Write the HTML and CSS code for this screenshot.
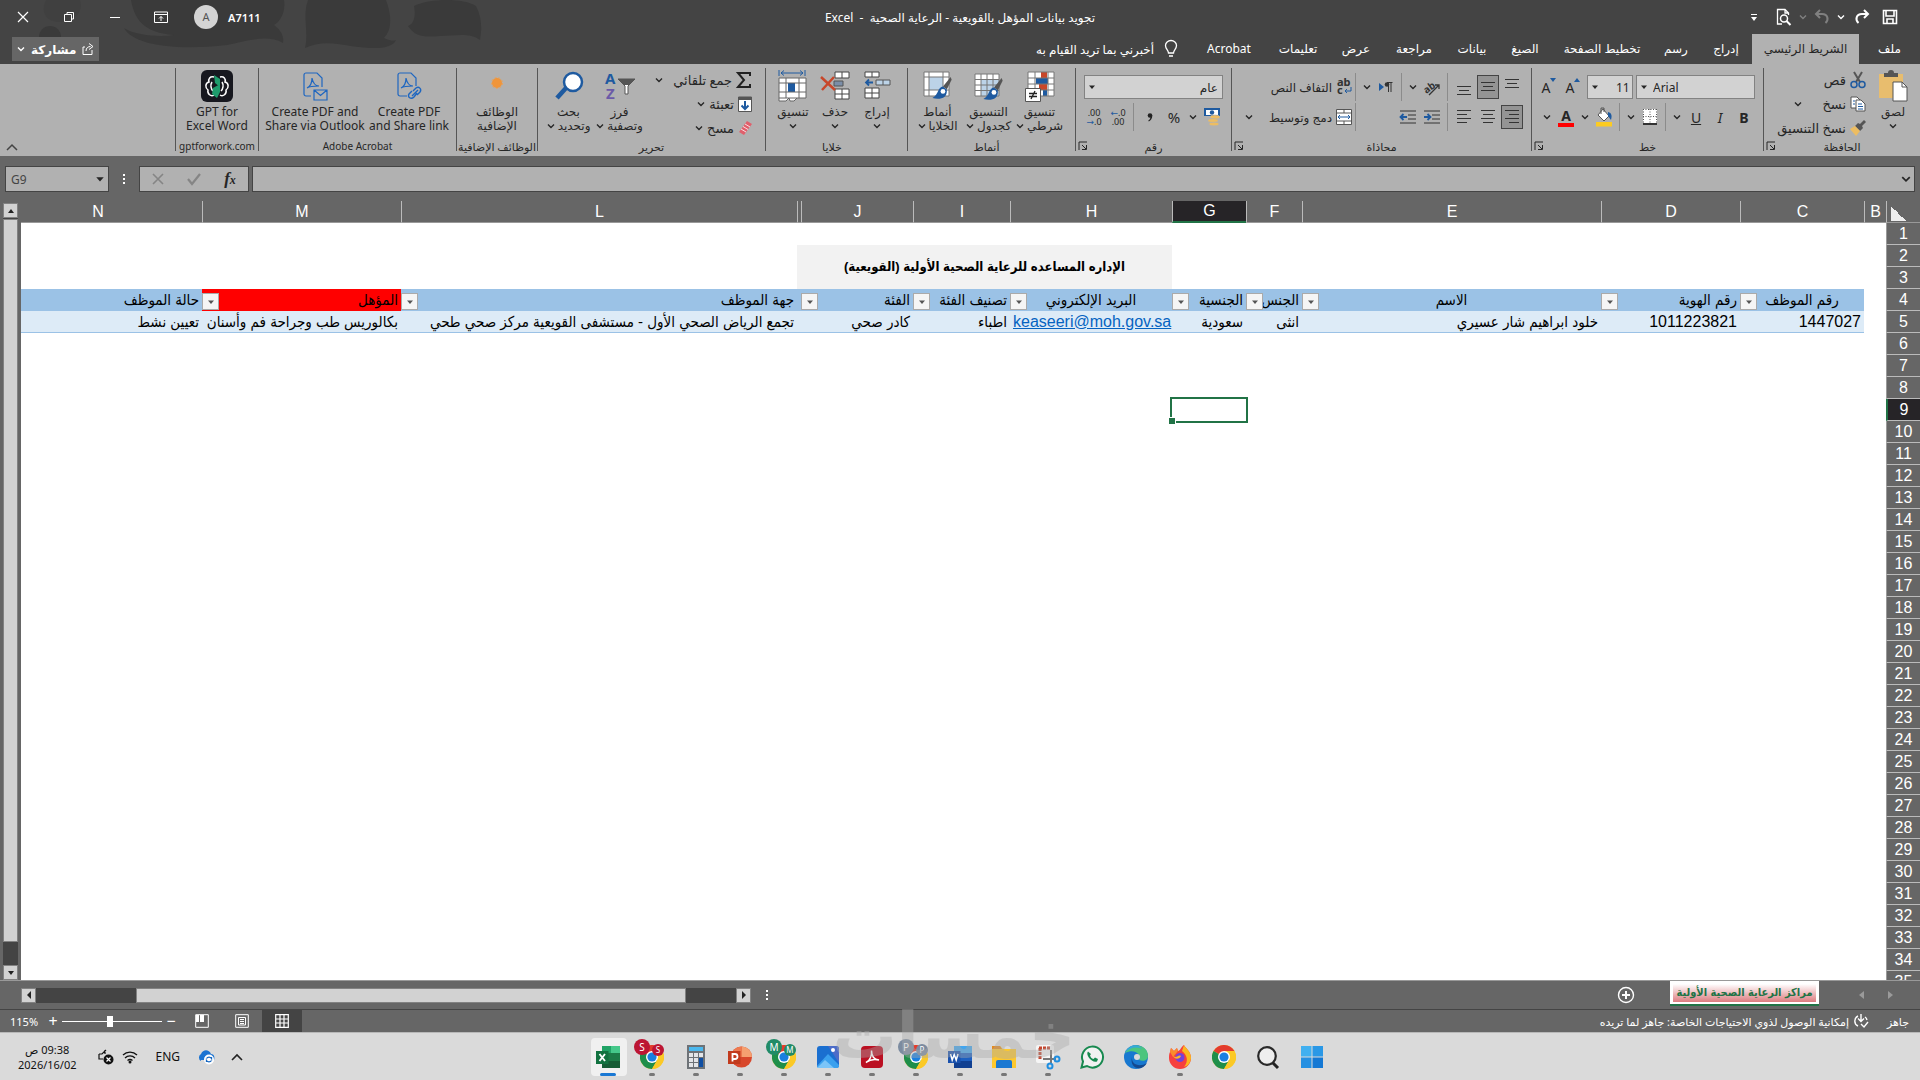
FILE: index.html
```html
<!DOCTYPE html>
<html lang="ar" dir="rtl">
<head>
  <meta charset="UTF-8">
  <meta name="viewport" content="width=device-width, initial-scale=1.0">
  <title>تجويد بيانات المؤهل بالقويعية - الرعاية الصحية - Excel</title>
  <link rel="stylesheet" href="styles.css">
</head>
<body>

<!-- Icons used more than once -->
<svg class="sprite" aria-hidden="true">
  <symbol id="chev" viewBox="0 0 8 8"><path d="M1 2.500l3 3 3-3" fill="none" stroke="currentColor" stroke-width="1.400"/></symbol>
  <symbol id="tri" viewBox="0 0 8 8"><path d="M1 2.500h6L4 6z" fill="currentColor"/></symbol>
  <symbol id="launch" viewBox="0 0 10 10"><path d="M1 9V1h8M4 4l4 4M8.500 4v4.500H4" fill="none" stroke="currentColor"/></symbol>
  <symbol id="chrome" viewBox="0 0 24 24">
    <circle cx="12" cy="12" r="12" fill="#fbc926"/>
    <path d="M12 12L1.600 6A12 12 0 0 1 22.400 6z" fill="#e33b2e"/>
    <path d="M12 12L1.600 6A12 12 0 0 0 12 24l5.200-9z" fill="#1e8e4a"/>
    <path d="M12 12L12 6h10.400A12 12 0 0 1 12 24l5.200-9z" fill="#fbc926"/>
    <circle cx="12" cy="12" r="6" fill="#fff"/><circle cx="12" cy="12" r="4.600" fill="#1a7fe0"/>
  </symbol>
  <symbol id="brush" viewBox="0 0 20 26">
    <path d="M19 1l-8 10 4 3 5-10z" fill="#555"/><path d="M11 11c-6 1-4 8-11 12 8 2 16 0 15-9z" fill="#1e5aa0"/><circle cx="11" cy="16" r="2.500" fill="#fff"/>
  </symbol>
</svg>

<header class="titlebar">
  <svg class="pattern" viewBox="0 0 520 64" aria-hidden="true">
    <g fill="#3a3a3a">
      <path d="M131 0h153c2 12-4 22-10 25 8 6 10 12 9 18-16-9-36-2-56 2-52 6-94 0-103-17 12 8 38 9 50 7-32-2-40-18-43-35z"/>
      <path d="M308 0h78c6 16 6 30-2 38 6 3 10 3 12 2-6 14-44 6-58 4-14-2-24 0-33 4 4-16-3-32 3-48z"/>
      <path d="M414 6c16-8 50-8 62 0 6 12 6 22 4 34-10-8-26-4-40-4-14 1-24 2-32-10 6-2 8-10 6-20z"/>
      <circle cx="50" cy="37" r="11"/>
    </g>
    <path d="M46 0h34c4 12-6 22-20 22S40 12 46 0z" fill="#404040"/>
  </svg>
  <div class="quick">
    <button aria-label="حفظ"><svg width="16" height="16" viewBox="0 0 16 16"><path d="M1.500 1.500h13v13h-13zM4 2v5h8V2M5 14v-4h6v4" fill="none" stroke="#fff" stroke-width="1.600"/></svg></button>
    <button aria-label="إعادة"><svg width="16" height="16" viewBox="0 0 16 16"><path d="M4.500 14C1 11 2 5 8 5h6M10 1l4 4-4 4" fill="none" stroke="#fff" stroke-width="2"/></svg></button>
    <button class="mini" aria-label="خيارات الإعادة"><svg width="8" height="8"><use href="#chev"/></svg></button>
    <button class="dim" aria-label="تراجع"><svg width="16" height="16" viewBox="0 0 16 16"><path d="M11.500 14C15 11 14 5 8 5H2M6 1L2 5l4 4" fill="none" stroke="currentColor" stroke-width="2"/></svg></button>
    <button class="mini dim" aria-label="خيارات التراجع"><svg width="8" height="8"><use href="#chev"/></svg></button>
    <button aria-label="معاينة"><svg width="16" height="18" viewBox="0 0 16 18"><path d="M6 16H1.500V1.500H9L12.500 5v2M9 1.500V5h3.500" fill="none" stroke="#fff" stroke-width="1.300"/><circle cx="8" cy="10.500" r="3.500" fill="none" stroke="#fff" stroke-width="1.500"/><path d="M10.500 13l4 4" stroke="#fff" stroke-width="2"/></svg></button>
    <button class="more" aria-label="تخصيص"><svg width="8" height="9" viewBox="0 0 8 9"><path d="M1 1.500h6" stroke="#fff"/><path d="M1 4h6L4 8z" fill="#fff"/></svg></button>
  </div>
  <h1>تجويد بيانات المؤهل بالقويعية - الرعاية الصحية &nbsp;-&nbsp; Excel</h1>
  <div class="window">
    <span>A7111</span><span class="avatar">A</span>
    <button aria-label="عرض الشريط"><svg width="14" height="12" viewBox="0 0 14 12"><path d="M.500 1h13v10.500H.500zM1 3.500h12M7 10V5.500M5 7.500l2-2 2 2" fill="none" stroke="#fff"/></svg></button>
    <button aria-label="تصغير"><svg width="12" height="12" viewBox="0 0 12 12"><path d="M1 6.500h10" stroke="#fff"/></svg></button>
    <button aria-label="استعادة"><svg width="12" height="12" viewBox="0 0 12 12"><path d="M1.500 3.500h7v7h-7zM4 3V1.500h6.500V8H9" fill="none" stroke="#fff"/></svg></button>
    <button aria-label="إغلاق"><svg width="12" height="12" viewBox="0 0 12 12"><path d="M1 1l10 10M11 1L1 11" stroke="#fff" stroke-width="1.200"/></svg></button>
  </div>
</header>

<div class="tabbar">
  <nav>
    <a href="#">ملف</a><a href="#" class="active">الشريط الرئيسي</a><a href="#">إدراج</a><a href="#">رسم</a>
    <a href="#">تخطيط الصفحة</a><a href="#">الصيغ</a><a href="#">بيانات</a><a href="#">مراجعة</a>
    <a href="#">عرض</a><a href="#">تعليمات</a><a href="#">Acrobat</a>
  </nav>
  <button class="tell"><svg width="14" height="18" viewBox="0 0 14 18"><path d="M4.500 13c0-3-3-4-3-7.500a5.500 5 0 0 1 11 0c0 3.500-3 4.500-3 7.500zM5 16h4" fill="none" stroke="#fff" stroke-width="1.300"/></svg>أخبرني بما تريد القيام به</button>
  <button class="share"><svg width="12" height="12" viewBox="0 0 12 12"><path d="M3 4H1v7.500h9V7M4 8c0-3 2-4.500 4.500-4.500M7 .500l4 3-4 3" fill="none" stroke="#fff"/></svg>مشاركة<svg width="8" height="8"><use href="#chev"/></svg></button>
</div>

<div class="ribbon">
  <section class="group clip">
    <div class="body">
      <button class="big"><svg width="30" height="32" viewBox="0 0 30 32"><path d="M1 4h24v24H1z" fill="#e8bd6e"/><path d="M6 7V3h4a3 3 0 0 1 6 0h4v4z" fill="#555"/><path d="M15 12h9l5 5v14H15z" fill="#fff" stroke="#555"/><path d="M24 12v5h5" fill="none" stroke="#555"/></svg>لصق<svg width="8" height="8"><use href="#chev"/></svg></button>
      <div class="list">
        <button><svg width="16" height="18" viewBox="0 0 16 18"><path d="M4 1l6 10M12 1L6 11" stroke="#555" stroke-width="2"/><circle cx="4" cy="13.500" r="3" fill="none" stroke="#1e5aa0" stroke-width="1.500"/><circle cx="12" cy="13.500" r="3" fill="none" stroke="#1e5aa0" stroke-width="1.500"/></svg>قص</button>
        <button><svg width="16" height="16" viewBox="0 0 16 16"><path d="M1 1h6l3 3v8H1z" fill="#fff" stroke="#555"/><path d="M6 4h5l4 4v7H6z" fill="#fff" stroke="#555"/><path d="M3 5h2M3 8h2M8 8h4M8 10.500h5M8 13h5" stroke="#1e5aa0"/></svg>نسخ<svg class="gap" width="8" height="8"><use href="#chev"/></svg></button>
        <button><svg width="16" height="16" viewBox="0 0 16 16"><path d="M14 0l2 2-4 4 1 2-3 3-5-5 3-3 2 1z" fill="#555"/><path d="M5 6l5 5-4 5-6-7z" fill="#edbd62"/></svg>نسخ التنسيق</button>
      </div>
    </div>
    <h2>الحافظة</h2>
    <button class="launcher" aria-label="خيارات الحافظة"><svg width="10" height="10"><use href="#launch"/></svg></button>
  </section>

  <section class="group font">
    <div class="body rows">
      <div class="row">
        <label class="combo name" dir="ltr"><select aria-label="الخط"><option>Arial</option></select><svg width="8" height="8"><use href="#tri"/></svg></label>
        <label class="combo size" dir="ltr"><select aria-label="حجم الخط"><option>11</option></select><svg width="8" height="8"><use href="#tri"/></svg></label>
        <button class="t letter" aria-label="تكبير الخط">A<svg width="6" height="5" viewBox="0 0 6 5"><path d="M0 4l3-4 3 4z" fill="#1e5aa0"/></svg></button>
        <button class="t letter" aria-label="تصغير الخط">A<svg width="6" height="5" viewBox="0 0 6 5"><path d="M0 0l3 4 3-4z" fill="#1e5aa0"/></svg></button>
      </div>
      <div class="row">
        <button class="t"><b>B</b></button><button class="t"><i>I</i></button><button class="t"><u>U</u></button>
        <button class="c" aria-label="تسطير"><svg width="8" height="8"><use href="#chev"/></svg></button><span class="sep"></span>
        <button class="t" aria-label="حدود"><svg width="14" height="16" viewBox="0 0 14 16"><path d="M0 0h14v15H0z" fill="#fff"/><path d="M0 .500h14M0 7.500h14M.500 0v15M7 0v15M13.500 0v15" stroke="#555" stroke-dasharray="1 1.500"/><path d="M0 15h14" stroke="#333" stroke-width="2"/></svg></button>
        <button class="c" aria-label="أنواع الحدود"><svg width="8" height="8"><use href="#chev"/></svg></button><span class="sep"></span>
        <button class="t" aria-label="لون التعبئة"><svg width="18" height="20" viewBox="0 0 18 20"><path d="M8 2l6 7-5 5-6-6z" fill="#fff" stroke="#555"/><path d="M6 7V1h3v4" fill="none" stroke="#555"/><path d="M13 5c4 1 4 4 3 8l-3-4z" fill="#1e5aa0"/><path d="M1 15h16v4.500H1z" fill="#fccb22"/></svg></button>
        <button class="c" aria-label="ألوان التعبئة"><svg width="8" height="8"><use href="#chev"/></svg></button>
        <button class="t color" aria-label="لون الخط">A</button>
        <button class="c" aria-label="ألوان الخط"><svg width="8" height="8"><use href="#chev"/></svg></button>
      </div>
    </div>
    <h2>خط</h2>
    <button class="launcher" aria-label="خيارات الخط"><svg width="10" height="10"><use href="#launch"/></svg></button>
  </section>

  <section class="group align">
    <div class="body rows">
      <div class="row">
        <button class="t" aria-label="محاذاة لأعلى"><svg width="16" height="16" viewBox="0 0 16 16"><path d="M1 .500h14M3 4.500h10M1 8.500h14" stroke="#333"/></svg></button>
        <button class="t on" aria-label="محاذاة للوسط"><svg width="16" height="16" viewBox="0 0 16 16"><path d="M1 3.500h14M3 7.500h10M1 11.500h14" stroke="#333"/></svg></button>
        <button class="t" aria-label="محاذاة لأسفل"><svg width="16" height="16" viewBox="0 0 16 16"><path d="M1 7.500h14M3 11.500h10M1 15.500h14" stroke="#333"/></svg></button><span class="sep"></span>
        <button class="t" aria-label="الاتجاه"><svg width="18" height="16" viewBox="0 0 18 16"><text x="0" y="11" font-size="10" font-weight="bold" transform="rotate(-35 8 8)" direction="ltr" fill="#333">ab</text><path d="M6 16L16 6M12 6h4v4" fill="none" stroke="#333" stroke-width="1.300"/></svg></button>
        <button class="c" aria-label="خيارات الاتجاه"><svg width="8" height="8"><use href="#chev"/></svg></button><span class="sep"></span>
        <button class="t" aria-label="اتجاه النص"><svg width="14" height="12" viewBox="0 0 14 12"><path d="M0 2l5 4-5 4z" fill="#1e5aa0"/><path d="M9.500 11V1.500M12 11V1.500M13.500 1.500H8" fill="none" stroke="#333"/><circle cx="8" cy="3.500" r="2.300" fill="#333"/></svg></button>
        <button class="c" aria-label="خيارات اتجاه النص"><svg width="8" height="8"><use href="#chev"/></svg></button><span class="sep"></span>
        <button class="wide"><svg width="16" height="18" viewBox="0 0 16 18"><g font-size="11" font-weight="bold" fill="#333" direction="ltr"><text x="1" y="8">ab</text><text x="1" y="16">c</text></g><path d="M15 9v4H9M11 11l-2 2 2 2" fill="none" stroke="#1e5aa0"/></svg>التفاف النص</button>
      </div>
      <div class="row">
        <button class="t on" aria-label="محاذاة لليمين"><svg width="16" height="16" viewBox="0 0 16 16"><path d="M1 1.500h14M5 5.500h10M1 9.500h14M5 13.500h10" stroke="#333"/></svg></button>
        <button class="t" aria-label="توسيط"><svg width="16" height="16" viewBox="0 0 16 16"><path d="M1 1.500h14M3 5.500h10M1 9.500h14M3 13.500h10" stroke="#333"/></svg></button>
        <button class="t" aria-label="محاذاة لليسار"><svg width="16" height="16" viewBox="0 0 16 16"><path d="M1 1.500h14M1 5.500h10M1 9.500h14M1 13.500h10" stroke="#333"/></svg></button><span class="sep"></span>
        <button class="t" aria-label="إنقاص المسافة"><svg width="16" height="14" viewBox="0 0 16 14"><path d="M0 1h16M8 5h8M8 9h8M0 13h16" stroke="#333"/><path d="M0 7h6M3.500 4l3 3-3 3" fill="none" stroke="#1e5aa0" stroke-width="1.800"/></svg></button>
        <button class="t" aria-label="زيادة المسافة"><svg width="16" height="14" viewBox="0 0 16 14"><path d="M0 1h16M8 5h8M8 9h8M0 13h16" stroke="#333"/><path d="M7 7H1M3.500 4l-3 3 3 3" fill="none" stroke="#1e5aa0" stroke-width="1.800"/></svg></button>
        <span class="blank"></span><span class="sep"></span>
        <button class="wide"><svg width="16" height="16" viewBox="0 0 16 16"><path d="M.500 .500h15v15H.500z" fill="#fff" stroke="#555"/><path d="M0 4h16M0 12h16M8 0v4M8 12v4" stroke="#555"/><path d="M2 8h12M4 6L2 8l2 2M12 6l2 2-2 2" fill="none" stroke="#1e5aa0"/></svg>دمج وتوسيط</button>
        <button class="c end" aria-label="خيارات الدمج"><svg width="8" height="8"><use href="#chev"/></svg></button>
      </div>
    </div>
    <h2>محاذاة</h2>
    <button class="launcher" aria-label="خيارات المحاذاة"><svg width="10" height="10"><use href="#launch"/></svg></button>
  </section>

  <section class="group number">
    <div class="body rows">
      <div class="row">
        <label class="combo format"><select aria-label="تنسيق الأرقام"><option>عام</option></select><svg width="8" height="8"><use href="#tri"/></svg></label>
      </div>
      <div class="row">
        <button class="t" aria-label="عملة"><svg width="18" height="18" viewBox="0 0 18 18"><path d="M1 0h16v8H1z" fill="#1e5aa0"/><path d="M3 2h12v5H3z" fill="#fff"/><circle cx="9" cy="4.500" r="2.200" fill="#1e5aa0"/><g fill="#edbd62" stroke="#b1b1b1" stroke-width=".6"><ellipse cx="12" cy="9" rx="5" ry="2"/><ellipse cx="10" cy="12.500" rx="5" ry="2"/><ellipse cx="11" cy="16" rx="5" ry="1.800"/></g></svg></button>
        <button class="c" aria-label="عملات"><svg width="8" height="8"><use href="#chev"/></svg></button>
        <button class="t pct">%</button><button class="t comma" aria-label="نمط الفاصلة"><svg width="6" height="9" viewBox="0 0 6 9"><circle cx="3" cy="2.500" r="2.300" fill="#222"/><path d="M5.300 2.500c0 3-1.500 5-3.500 6l-.500-1C3 6.500 3.500 5 3.500 3z" fill="#222"/></svg></button><span class="sep"></span>
        <button class="t dec" aria-label="زيادة المنازل"><span><em>←</em>.0</span><span>.00</span></button>
        <button class="t dec" aria-label="إنقاص المنازل"><span>.00</span><span><em>→</em>.0</span></button>
      </div>
    </div>
    <h2>رقم</h2>
    <button class="launcher" aria-label="خيارات الرقم"><svg width="10" height="10"><use href="#launch"/></svg></button>
  </section>

  <section class="group styles">
    <div class="body">
      <button class="big"><svg width="30" height="32" viewBox="0 0 30 32"><path d="M3 2h26v24H3z" fill="#fff"/><path d="M16 2h6v6h-6zM14 14h8v6h-8z" fill="#c8472a"/><path d="M11 8h12v6H11zM18 20h4v6h-4z" fill="#1e5aa0"/><path d="M3 2h26v24H3zM3 8h26M3 14h26M3 20h26M10 2v24M23 2v24" fill="none" stroke="#777"/><path d="M.500 18.500h15v13H.500z" fill="#fff" stroke="#555"/><path d="M4 23.500h8M4 26.500h8M10 21l-4 8" stroke="#222" stroke-width="1.300"/></svg><span>تنسيق</span><span>شرطي <svg width="8" height="8"><use href="#chev"/></svg></span></button>
      <button class="big"><svg width="30" height="32" viewBox="0 0 30 32"><path d="M1 4h24v22H1z" fill="#fff"/><path d="M7 10h18v16H7z" fill="#bcd3e8"/><path d="M1 4h24v22H1zM1 9.500h24M1 15h24M1 20.500h24M7 4v22M13 4v22M19 4v22" fill="none" stroke="#777"/><use href="#brush" x="9" y="7" width="20" height="25"/></svg><span>التنسيق</span><span>كجدول <svg width="8" height="8"><use href="#chev"/></svg></span></button>
      <button class="big"><svg width="30" height="32" viewBox="0 0 30 32"><path d="M1 2h25v24H1z" fill="#fff"/><path d="M6 7h14v13H6z" fill="#bcd3e8"/><path d="M1 2h25v24H1zM1 7h25M1 20h25M6 2v24M20 2v24" fill="none" stroke="#777"/><use href="#brush" x="9" y="6" width="20" height="25"/></svg><span>أنماط</span><span>الخلايا <svg width="8" height="8"><use href="#chev"/></svg></span></button>
    </div>
    <h2>أنماط</h2>
  </section>

  <section class="group cells">
    <div class="body">
      <button class="big"><svg width="28" height="32" viewBox="0 0 28 32"><path d="M2 2h14v5H2zM2 18h14v10H2z" fill="#fff" stroke="#444"/><path d="M9 2v5M9 18v10M2 23h14" stroke="#444"/><path d="M13 10h14v5H13z" fill="#bcd3e8" stroke="#555"/><path d="M20 10v5" stroke="#555"/><path d="M3 12.500h7M6 9.500l-3 3 3 3" fill="none" stroke="#1e5aa0" stroke-width="1.800"/></svg>إدراج<svg width="8" height="8"><use href="#chev"/></svg></button>
      <button class="big"><svg width="30" height="32" viewBox="0 0 30 32"><path d="M15 2h14v6H15zM15 19h14v10H15z" fill="#fff" stroke="#444"/><path d="M22 2v6M22 19v10M15 24h14" stroke="#444"/><path d="M14 11h9v5h-9z" fill="#7b8ea8" stroke="#555"/><path d="M1 7l14 13M14 7L2 20" stroke="#c8472a" stroke-width="2.500"/></svg>حذف<svg width="8" height="8"><use href="#chev"/></svg></button>
      <button class="big"><svg width="30" height="32" viewBox="0 0 30 32"><path d="M3 3h22M6 .500L3 3l3 2.500M22 .500L25 3l-3 2.500M1 0v6M27 0v6" fill="none" stroke="#1e5aa0"/><path d="M1 8h27v20H19l-3 3h-4l-1-2-3 2H1z" fill="#fff"/><path d="M10 13h7v9h-7z" fill="#1e5aa0"/><path d="M1 8h27v20H1zM1 13h27M1 22h27M8 8v20M19 28l-3 3h-4l-1-3-3 3H1v-3M21 8v20" fill="none" stroke="#666"/></svg>تنسيق<svg width="8" height="8"><use href="#chev"/></svg></button>
    </div>
    <h2>خلايا</h2>
  </section>

  <section class="group editing">
    <div class="body">
      <div class="list">
        <button><svg width="16" height="16" viewBox="0 0 16 16"><path d="M14 4V1H2l6 7-6 7h12v-3" fill="none" stroke="#222" stroke-width="2"/></svg>جمع تلقائي<svg class="end" width="8" height="8"><use href="#chev"/></svg></button>
        <button><svg width="14" height="16" viewBox="0 0 14 16"><path d="M.500 1h13v14.500H.500z" fill="#fff" stroke="#555"/><path d="M1 1h12v3H1z" fill="#555"/><path d="M7 5v8M3.500 9.500L7 13l3.500-3.500" fill="none" stroke="#1e5aa0" stroke-width="2"/></svg>تعبئة<svg width="8" height="8"><use href="#chev"/></svg></button>
        <button><svg width="14" height="14" viewBox="0 0 14 14"><path d="M9 0l5 3-8 11-5-3z" fill="#e0606c"/><path d="M3 8l5 3M5 5.500l5 3M7 3l5 3" stroke="#fff" stroke-width=".8"/></svg>مسح<svg width="8" height="8"><use href="#chev"/></svg></button>
      </div>
      <button class="big"><svg width="30" height="32" viewBox="0 0 30 32"><g font-size="15" font-weight="bold" direction="ltr"><text x="0" y="14" fill="#1e5aa0">A</text><text x="1" y="29" fill="#6b5aa8">Z</text></g><path d="M13 9h17l-7 7v8h-3v-8z" fill="#fff" stroke="#555"/><path d="M13 9h17l-6 6h-5z" fill="#555"/></svg><span>فرز</span><span>وتصفية <svg width="8" height="8"><use href="#chev"/></svg></span></button>
      <button class="big"><svg width="30" height="32" viewBox="0 0 30 32"><circle cx="19" cy="12" r="9" fill="#fff" stroke="#1e5aa0" stroke-width="2.500"/><path d="M12 18L3 28" stroke="#1e5aa0" stroke-width="4.500"/></svg><span>بحث</span><span>وتحديد <svg width="8" height="8"><use href="#chev"/></svg></span></button>
    </div>
    <h2>تحرير</h2>
  </section>

  <section class="group addins">
    <div class="body">
      <button class="big"><svg width="30" height="32" viewBox="0 0 30 32"><circle cx="15" cy="13" r="5" fill="#f0953a"/><circle cx="15" cy="13" r="5.500" fill="none" stroke="#e9a35c" stroke-dasharray="2 1.800"/></svg><span>الوظائف</span><span>الإضافية</span></button>
    </div>
    <h2>الوظائف الإضافية</h2>
  </section>

  <section class="group acrobat">
    <div class="body">
      <button class="big"><svg width="28" height="32" viewBox="0 0 28 32"><path d="M12 26H5a2 2 0 0 1-2-2V5a2 2 0 0 1 2-2h11l5 5v8M6 18c4-2 5-6 5-10 1 5 3 8 7 8-4 0-9 0-12 2" fill="none" stroke="#1e66c0" stroke-width="1.200"/><path d="M18 21l3-3c3-2 6 1 4 4l-3 3M22 23l-3 4c-3 3-7 0-5-3l3-3M17 26l6-6" fill="none" stroke="#1e66c0" stroke-width="1.400"/></svg><span>Create PDF</span><span>and Share link</span></button>
      <button class="big"><svg width="28" height="32" viewBox="0 0 28 32"><path d="M10 26H5a2 2 0 0 1-2-2V5a2 2 0 0 1 2-2h11l5 5v9M6 18c4-2 5-6 5-10 1 5 3 8 7 8-4 0-9 0-12 2M13 20h13v10H13zM13 20l6.500 5.500L26 20" fill="none" stroke="#1e66c0" stroke-width="1.200"/></svg><span>Create PDF and</span><span>Share via Outlook</span></button>
    </div>
    <h2 class="latin">Adobe Acrobat</h2>
  </section>

  <section class="group gpt">
    <div class="body">
      <button class="big"><svg width="32" height="32" viewBox="0 0 32 32"><rect width="32" height="32" rx="6" fill="#17181f"/><path d="M13 7C9 6 7 9 8 12c-4 1-4 6-1 8-1 4 3 7 6 5M19 7c4-1 6 2 5 5 4 1 4 6 1 8 1 4-3 7-6 5M11 12c-2 3-1 7 1 9M21 12c2 3 1 7-1 9" fill="none" stroke="#fff" stroke-width="1.500"/><path d="M13 5l6 4v8l-5-4zM19 14v8l-3 6-5-4 1-6z" fill="#1f9c6c"/></svg><span>GPT for</span><span>Excel Word</span></button>
    </div>
    <h2 class="latin">gptforwork.com</h2>
  </section>
  <button class="collapse" aria-label="طي الشريط"><svg width="12" height="8" viewBox="0 0 12 8"><path d="M1 7l5-5 5 5" fill="none" stroke="#444" stroke-width="1.500"/></svg></button>
</div>

<div class="formula">
  <label class="entry"><input type="text" aria-label="شريط الصيغة"><svg width="10" height="10"><use href="#chev"/></svg></label>
  <div class="fx">
    <button aria-label="إدراج دالة"><i>f<small>x</small></i></button>
    <button aria-label="إدخال"><svg width="14" height="12" viewBox="0 0 14 12"><path d="M1 6l4 5 8-10" fill="none" stroke="#858585" stroke-width="2.200"/></svg></button>
    <button aria-label="إلغاء"><svg width="12" height="12" viewBox="0 0 12 12"><path d="M1 1l10 10M11 1L1 11" stroke="#858585" stroke-width="1.600"/></svg></button>
  </div>
  <span class="dots"></span>
  <label class="namebox" dir="ltr"><input type="text" value="G9" aria-label="مربع الاسم"><svg width="10" height="10"><use href="#tri"/></svg></label>
</div>

<main class="sheet">
  <div class="grid">
    <table>
      <colgroup>
        <col class="hd"><col class="b"><col class="cc"><col class="d"><col class="e"><col class="f"><col class="g"><col class="h"><col class="i"><col class="j"><col class="k"><col class="l"><col class="m"><col>
      </colgroup>
      <thead>
        <tr><th class="corner"></th><th>B</th><th>C</th><th>D</th><th>E</th><th>F</th><th class="cur">G</th><th>H</th><th>I</th><th>J</th><th></th><th>L</th><th>M</th><th>N</th></tr>
      </thead>
      <tbody>
        <tr><th>1</th><td colspan="13"></td></tr>
        <tr><th>2</th><td colspan="6"></td><td class="banner" colspan="4" rowspan="2">الإداره المساعده للرعاية الصحية الأولية (القويعية)</td><td colspan="3"></td></tr>
        <tr><th>3</th><td colspan="6"></td><td colspan="3"></td></tr>
        <tr class="fields">
          <th>4</th><td class="none"></td>
          <td class="mid">رقم الموظف<button aria-label="تصفية رقم الموظف"><svg width="8" height="8"><use href="#tri"/></svg></button></td>
          <td>رقم الهوية<button aria-label="تصفية رقم الهوية"><svg width="8" height="8"><use href="#tri"/></svg></button></td>
          <td class="mid">الاسم<button aria-label="تصفية الاسم"><svg width="8" height="8"><use href="#tri"/></svg></button></td>
          <td>الجنس<button aria-label="تصفية الجنس"><svg width="8" height="8"><use href="#tri"/></svg></button></td>
          <td>الجنسية<button aria-label="تصفية الجنسية"><svg width="8" height="8"><use href="#tri"/></svg></button></td>
          <td class="mid">البريد الإلكتروني<button aria-label="تصفية البريد"><svg width="8" height="8"><use href="#tri"/></svg></button></td>
          <td>تصنيف الفئة<button aria-label="تصفية تصنيف الفئة"><svg width="8" height="8"><use href="#tri"/></svg></button></td>
          <td>الفئة<button aria-label="تصفية الفئة"><svg width="8" height="8"><use href="#tri"/></svg></button></td>
          <td></td>
          <td>جهة الموظف<button aria-label="تصفية جهة الموظف"><svg width="8" height="8"><use href="#tri"/></svg></button></td>
          <td class="red">المؤهل<button aria-label="تصفية المؤهل"><svg width="8" height="8"><use href="#tri"/></svg></button></td>
          <td>حالة الموظف</td>
        </tr>
        <tr class="data"><th>5</th><td class="none"></td><td>1447027</td><td>1011223821</td><td>خلود ابراهيم شار عسيري</td><td>انثى</td><td>سعودية</td><td class="mail" dir="ltr"><a href="#">keaseeri@moh.gov.sa</a></td><td>اطباء</td><td>كادر صحي</td><td></td><td>تجمع الرياض الصحي الأول - مستشفى القويعية مركز صحي طحي</td><td>بكالوريس طب وجراحة فم وأسنان</td><td>تعيين نشط</td></tr>
        <tr><th>6</th><td colspan="13"></td></tr>
        <tr><th>7</th><td colspan="13"></td></tr>
        <tr><th>8</th><td colspan="13"></td></tr>
        <tr><th class="cur">9</th><td colspan="5"></td><td class="selected"></td><td colspan="7"></td></tr>
        <tr><th>10</th><td colspan="13"></td></tr>
        <tr><th>11</th><td colspan="13"></td></tr>
        <tr><th>12</th><td colspan="13"></td></tr>
        <tr><th>13</th><td colspan="13"></td></tr>
        <tr><th>14</th><td colspan="13"></td></tr>
        <tr><th>15</th><td colspan="13"></td></tr>
        <tr><th>16</th><td colspan="13"></td></tr>
        <tr><th>17</th><td colspan="13"></td></tr>
        <tr><th>18</th><td colspan="13"></td></tr>
        <tr><th>19</th><td colspan="13"></td></tr>
        <tr><th>20</th><td colspan="13"></td></tr>
        <tr><th>21</th><td colspan="13"></td></tr>
        <tr><th>22</th><td colspan="13"></td></tr>
        <tr><th>23</th><td colspan="13"></td></tr>
        <tr><th>24</th><td colspan="13"></td></tr>
        <tr><th>25</th><td colspan="13"></td></tr>
        <tr><th>26</th><td colspan="13"></td></tr>
        <tr><th>27</th><td colspan="13"></td></tr>
        <tr><th>28</th><td colspan="13"></td></tr>
        <tr><th>29</th><td colspan="13"></td></tr>
        <tr><th>30</th><td colspan="13"></td></tr>
        <tr><th>31</th><td colspan="13"></td></tr>
        <tr><th>32</th><td colspan="13"></td></tr>
        <tr><th>33</th><td colspan="13"></td></tr>
        <tr><th>34</th><td colspan="13"></td></tr>
        <tr><th>35</th><td colspan="13"></td></tr>
      </tbody>
    </table>
  </div>
  <div class="vscroll">
    <button aria-label="أعلى"><svg width="10" height="10" viewBox="0 0 10 10"><path d="M2 7h6L5 3z" fill="#222"/></svg></button>
    <span class="thumb"></span>
    <button aria-label="أسفل"><svg width="10" height="10" viewBox="0 0 10 10"><path d="M2 3h6L5 7z" fill="#222"/></svg></button>
  </div>
</main>

<div class="sheetbar">
  <button class="step" aria-label="الورقة السابقة"><svg width="6" height="8" viewBox="0 0 6 8"><path d="M1 0l5 4-5 4z" fill="#9a9a9a"/></svg></button>
  <button class="step" aria-label="الورقة التالية"><svg width="6" height="8" viewBox="0 0 6 8"><path d="M5 0L0 4l5 4z" fill="#9a9a9a"/></svg></button>
  <a class="sheettab" href="#"><span>مراكز الرعاية الصحية الأولية</span></a>
  <button class="plus" aria-label="ورقة جديدة"><svg width="18" height="18" viewBox="0 0 18 18"><circle cx="9" cy="9" r="7.500" fill="none" stroke="#fff" stroke-width="1.400"/><path d="M9 5v8M5 9h8" stroke="#fff" stroke-width="2"/></svg></button>
  <span class="dots"></span>
  <div class="hscroll">
    <button aria-label="يمين"><svg width="10" height="10" viewBox="0 0 10 10"><path d="M3 1v8l4-4z" fill="#222"/></svg></button>
    <span class="thumb"></span>
    <button aria-label="يسار"><svg width="10" height="10" viewBox="0 0 10 10"><path d="M7 1v8L3 5z" fill="#222"/></svg></button>
  </div>
</div>

<footer class="status">
  <span>جاهز</span>
  <button class="access"><svg width="16" height="14" viewBox="0 0 16 14"><path d="M5 2a5.500 5.500 0 0 0 0 10M8 0v7M5 4.500l3 3 3-3M8 10l3 3 4-5M12 3a5 5 0 0 1 2 3" fill="none" stroke="#fff" stroke-width="1.400"/></svg>إمكانية الوصول لذوي الاحتياجات الخاصة: جاهز لما تريده</button>
  <div class="views">
    <button class="on" aria-label="عادي"><svg width="14" height="14" viewBox="0 0 14 14"><path d="M.700.700h12.600v12.600H.700zM5 1v12M9 1v12M1 5h12M1 9h12" fill="none" stroke="#fff" stroke-width="1.200"/></svg></button>
    <button aria-label="تخطيط الصفحة"><svg width="14" height="14" viewBox="0 0 14 14"><path d="M.700.700h12.600v12.600H.700zM3.500 3.500h7v7.500h-7zM5 5.500h4M5 7.500h4M5 9.500h4" fill="none" stroke="#fff"/></svg></button>
    <button aria-label="معاينة فواصل الصفحات"><svg width="14" height="14" viewBox="0 0 14 14"><path d="M.700.700h12.600v12.600H.700z" fill="none" stroke="#fff"/><path d="M1 1h3v7H1zM5 1h4v7H5z" fill="#fff"/></svg></button>
  </div>
  <button class="zoom" aria-label="تصغير العرض">−</button>
  <input type="range" min="0" max="100" value="52" aria-label="تكبير العرض">
  <button class="zoom" aria-label="زيادة التكبير">+</button>
  <span class="percent" dir="ltr">115%</span>
</footer>

<footer class="taskbar" dir="ltr">
  <div class="tray">
    <time><span dir="rtl">09:38 ص</span><span>2026/16/02</span></time>
    <svg width="16" height="16" viewBox="0 0 16 16"><path d="M7 1v4M1 5h3l4-4M1 5v5h4" fill="none" stroke="#111" stroke-width="1.200"/><circle cx="10.500" cy="10.500" r="5" fill="#111"/><path d="M8.500 8.500l4 4M12.500 8.500l-4 4" stroke="#fff" stroke-width="1.200"/></svg>
    <svg width="16" height="14" viewBox="0 0 16 14"><path d="M1 5a10 10 0 0 1 14 0M3 8a7 7 0 0 1 10 0M5.500 10.500a4 4 0 0 1 5 0" fill="none" stroke="#111" stroke-width="1.300"/><circle cx="8" cy="12" r="1.500" fill="#111"/></svg>
    <span class="lang">ENG</span>
    <svg width="18" height="16" viewBox="0 0 18 16"><path d="M4 12a4 4 0 0 1 0-7c2-5 8-5 10 0 3 0 4 3 3 6H4z" fill="#1a73d2"/><circle cx="12" cy="10.500" r="5" fill="#fff"/><path d="M9.500 9.500a3 3 0 0 1 5 0V8M14.500 11.500a3 3 0 0 1-5 0V13" fill="none" stroke="#1566c0" stroke-width="1.300"/></svg>
    <svg width="12" height="8" viewBox="0 0 12 8"><path d="M1 7l5-5 5 5" fill="none" stroke="#222" stroke-width="1.600"/></svg>
  </div>
  <div class="apps">
    <button class="app current" aria-label="Excel"><svg width="24" height="24" viewBox="0 0 24 24"><path d="M6 1h18v22H6z" fill="#1c7b47"/><path d="M6 1h9v7H6z" fill="#21a366"/><path d="M15 1h9v7h-9z" fill="#45c88a"/><path d="M6 16h18v7H6z" fill="#155c35"/><path d="M0 6h12.500v13H0z" fill="#127240"/><path d="M3.500 9l5.500 7M9 9l-5.500 7" stroke="#fff" stroke-width="1.900"/></svg></button>
    <button class="app run" aria-label="Chrome S"><svg width="24" height="24"><use href="#chrome"/></svg><em class="badge s">S</em><em class="badge s2">S</em></button>
    <button class="app run" aria-label="الحاسبة"><svg width="20" height="24" viewBox="0 0 20 24"><path d="M1 0h18v24H1z" fill="#6d7277"/><path d="M3 2h14v4H3z" fill="#4bb8ee"/><path d="M3 8h4v4H3zM8 8h4v4H8zM13 8h4v4h-4zM3 13h4v4H3zM8 13h4v4H8zM3 18h4v4H3zM8 18h4v4H8z" fill="#e3e5e8"/><path d="M13 13h4v9h-4z" fill="#0e4ea3"/></svg></button>
    <button class="app run" aria-label="PowerPoint"><svg width="24" height="24" viewBox="0 0 24 24"><circle cx="13.500" cy="12" r="10.500" fill="#d8472b"/><path d="M13.500 1.500A10.500 10.500 0 0 1 24 12H13.500z" fill="#f5a070"/><path d="M3 12A10.500 10.500 0 0 1 13.500 1.500V12z" fill="#ee7a50"/><path d="M0 6h12.500v13H0z" fill="#c23a1c"/><path d="M4.500 16.500V9h2.500a2.200 2.200 0 0 1 0 5H4.500" fill="none" stroke="#fff" stroke-width="1.800"/></svg></button>
    <button class="app run" aria-label="Chrome M"><svg width="24" height="24"><use href="#chrome"/></svg><em class="badge m">M</em><em class="badge m2">M</em></button>
    <button class="app run" aria-label="الصور"><svg width="24" height="24" viewBox="0 0 24 24"><rect x="1" y="1" width="22" height="22" rx="3" fill="#1a6fd0"/><path d="M12 1h8a3 3 0 0 1 3 3v14z" fill="#4c6cc8"/><path d="M1 21L12 9l11 11v1a2 2 0 0 1-2 2H3a2 2 0 0 1-2-2z" fill="#3aa0ee"/><path d="M1 23l8-8 9 8z" fill="#7cc5f8"/><circle cx="17" cy="5" r="2" fill="#fff"/></svg></button>
    <button class="app run" aria-label="Acrobat Reader"><svg width="24" height="24" viewBox="0 0 24 24"><rect x="1" y="1" width="22" height="22" rx="4" fill="#bb1022"/><path d="M6 17.500c4-2 6-7 5.500-12 0 6 3 9 7.500 9.500-4-1-9-.500-13 2.500z" fill="none" stroke="#fff" stroke-width="1.500"/></svg></button>
    <button class="app run" aria-label="Chrome P"><svg width="24" height="24"><use href="#chrome"/></svg><em class="badge p">P</em><em class="badge p2">P</em></button>
    <button class="app run" aria-label="Word"><svg width="24" height="24" viewBox="0 0 24 24"><path d="M6 1h18v22H6z" fill="#1d5fc0"/><path d="M6 1h18v7H6z" fill="#42a5ee"/><path d="M6 16h18v7H6z" fill="#103f91"/><path d="M0 6h12.500v12H0z" fill="#1951ad"/><path d="M2.500 9l1.700 6 2-5.500 2 5.500L10 9" fill="none" stroke="#fff" stroke-width="1.500"/></svg></button>
    <button class="app run" aria-label="المستكشف"><svg width="24" height="24" viewBox="0 0 24 24"><path d="M0 1h8l3 3h13v19H0z" fill="#fdc82f"/><path d="M0 1h8l2 3H0z" fill="#e48a1f"/><path d="M4 23v-6a2 2 0 0 1 2-2h12a2 2 0 0 1 2 2v6z" fill="#1a78d2"/></svg></button>
    <button class="app run" aria-label="أداة القطع"><svg width="24" height="24" viewBox="0 0 24 24"><rect width="18" height="18" rx="2" fill="#f5f5f5"/><path d="M3 3h12M4 3v12" stroke="#c4452d" stroke-width="3" stroke-dasharray="3 1"/><path d="M15 5v13M7 14h13" stroke="#777" stroke-width="2"/><circle cx="21" cy="14" r="2.500" fill="none" stroke="#1f8ee0" stroke-width="2"/><circle cx="14" cy="21" r="2.500" fill="none" stroke="#1f8ee0" stroke-width="2"/></svg></button>
    <button class="app" aria-label="WhatsApp"><svg width="24" height="24" viewBox="0 0 24 24"><path d="M1.500 22.500l1.500-6a10.500 10.500 0 1 1 4 4.500z" fill="#f1f1f1" stroke="#17894f" stroke-width="2"/><path d="M8 6.500c-3 3 4 12 9 10l1-2.500-3-1.500-1.500 1.500c-2-.500-3-2-3.500-3.500l1-1.500z" fill="#17894f"/></svg></button>
    <button class="app" aria-label="Edge"><svg width="24" height="24" viewBox="0 0 24 24"><circle cx="12" cy="12" r="12" fill="#1878d0"/><path d="M1 8C5-3 24-2 24 11c0 4-4 6-9 4 3-6-5-12-14-7z" fill="#4cc57e"/><path d="M1 8C5-1 14-2 18 4c-6-3-13-1-17 4z" fill="#35a9d8"/><path d="M8 12c-1 7 7 11 15 6-5 9-18 6-15-6z" fill="#14498f"/><circle cx="13" cy="12" r="3" fill="#dadada"/></svg></button>
    <button class="app run" aria-label="Firefox"><svg width="24" height="24" viewBox="0 0 24 24"><path d="M2 7l1-4 3 3 3-3 1 3c2 0 3-4 6-6 1 3 7 6 7 13a11 11 0 0 1-22 0c0-2 0-4 1-6z" fill="#f6403e"/><path d="M16 0c1 3 7 6 7 13a10 10 0 0 1-7 9c5-6 3-12-2-16z" fill="#fbb81e"/><path d="M3 3l3 3 3-3 1 3-5 6-3-5z" fill="#fb8a2c"/><circle cx="12" cy="12.500" r="4.500" fill="#7542d8"/><path d="M5 11c4 3 5-2 8 0-1 3-6 4-8 0z" fill="#fcb525"/></svg></button>
    <button class="app" aria-label="Chrome"><svg width="24" height="24"><use href="#chrome"/></svg></button>
    <button class="app" aria-label="بحث"><svg width="24" height="24" viewBox="0 0 24 24"><circle cx="11" cy="11" r="8.800" fill="#eee" stroke="#292929" stroke-width="2.200"/><path d="M17 18l5 5" stroke="#222" stroke-width="3"/></svg></button>
    <button class="app" aria-label="ابدأ"><svg width="24" height="24" viewBox="0 0 24 24"><path d="M1 1h10.500v10.500H1z" fill="#41b0f0"/><path d="M12.500 1H23v10.500H12.500z" fill="#2a98e6"/><path d="M1 12.500h10.500V23H1z" fill="#2590e2"/><path d="M12.500 12.500H23V23H12.500z" fill="#1478d4"/></svg></button>
  </div>
  <div class="watermark" dir="rtl" aria-hidden="true">خمسات</div>
</footer>

</body>
</html>
```
FILE: styles.css
```css
* {
  box-sizing: border-box;
}
html, body {
  margin: 0;
  height: 100%;
  overflow: hidden;
}
body {
  display: flex;
  flex-direction: column;
  background: #666;
  color: #262626;
  font-family: "Noto Sans", "DejaVu Sans", sans-serif;
  font-size: 12px;
}
button {
  display: flex;
  align-items: center;
  justify-content: center;
  padding: 0;
  border: 0;
  background: none;
  color: inherit;
  font: inherit;
  white-space: nowrap;
}
a {
  color: inherit;
  text-decoration: none;
}
svg {
  flex: none;
  overflow: visible;
}
.sprite {
  position: absolute;
  width: 0;
  height: 0;
}

/* Title bar */
.titlebar {
  position: relative;
  z-index: 1;
  display: grid;
  grid-template-columns: 1fr auto 1fr;
  align-items: center;
  height: 34px;
  background: #444;
  color: #fff;
}
.pattern {
  position: absolute;
  top: 0;
  left: 0;
  width: 520px;
  height: 64px;
}
.titlebar h1 {
  margin: 0;
  font-size: 12px;
  font-weight: normal;
}
.quick, .window {
  position: relative;
  display: flex;
  align-items: center;
}
.quick {
  padding-inline-start: 16px;
}
.quick button {
  width: 24px;
}
.quick button:nth-child(-n+2) {
  width: 28px;
}
.quick button.mini {
  width: 14px;
}
.quick button.more {
  width: 36px;
}
.dim {
  color: #808080;
}
.window {
  justify-content: flex-end;
  font-size: 11px;
  font-weight: 600;
}
.window button {
  width: 46px;
}
.avatar {
  width: 24px;
  height: 24px;
  margin: 0 10px;
  border-radius: 50%;
  background: #d4d4d4;
  color: #555;
  font-weight: normal;
  line-height: 24px;
  text-align: center;
}

/* Ribbon tabs */
.tabbar {
  display: flex;
  align-items: center;
  height: 30px;
  background: #444;
  color: #fff;
}
.tabbar nav {
  display: grid;
  grid-template-columns: 61px 107px 52px 48px 100px 54px 52px 64px 52px 64px 74px;
}
.tabbar a {
  line-height: 30px;
  text-align: center;
  white-space: nowrap;
}
.tabbar a.active {
  background: #b1b1b1;
  color: #262626;
}
.tell {
  gap: 10px;
  margin-inline-start: 14px;
}
.share {
  position: relative;
  z-index: 2;
  gap: 6px;
  height: 24px;
  margin-right: auto;
  margin-left: 12px;
  padding: 0 5px;
  background: #666;
  font-weight: bold;
}

/* Ribbon */
.ribbon {
  position: relative;
  z-index: 2;
  display: flex;
  height: 92px;
  padding: 4px 0 5px;
  background: #b1b1b1;
}
.group {
  position: relative;
  flex: none;
  display: flex;
  flex-direction: column;
  border-left: 1px solid #555;
}
.group h2 {
  margin: 0;
  font-size: 11px;
  font-weight: normal;
  line-height: 13px;
  text-align: center;
  white-space: nowrap;
}
.group .latin {
  font-size: 10px;
}
.group .body {
  flex: none;
  display: flex;
  height: 72px;
}
.clip { width: 157px; }
.font { width: 232px; }
.align { width: 300px; }
.number { width: 156px; }
.styles { width: 168px; padding-right: 10px; }
.cells { width: 142px; padding-right: 9px; }
.editing { width: 228px; }
.addins { width: 81px; }
.acrobat { width: 198px; }
.gpt { width: 83px; }
.group .rows {
  flex-direction: column;
  padding-top: 4px;
}
.row {
  display: flex;
  align-items: center;
  height: 30px;
  padding-right: 7px;
}
.t {
  width: 22px;
  height: 24px;
  margin: 0 1px;
  font-size: 14px;
}
.t.on {
  border: 1px solid #444;
  background: #949494;
}
.c {
  width: 14px;
  height: 24px;
}
.end {
  margin-right: auto;
  margin-left: 10px;
}
.sep {
  width: 1px;
  height: 28px;
  margin: 0 4px 0 3px;
  background: #8b8b8b;
}
.blank {
  width: 36px;
}
.wide {
  gap: 4px;
}
.combo {
  position: relative;
}
.combo select {
  display: block;
  width: 100%;
  height: 24px;
  padding: 0 16px;
  border: 1px solid #828282;
  border-radius: 0;
  appearance: none;
  background: #d2d2d2;
  color: #262626;
  font: inherit;
}
.combo svg {
  position: absolute;
  top: 8px;
  left: 4px;
}
.name {
  width: 119px;
  margin: 0 1px;
}
.size {
  width: 46px;
  margin: 0 2px;
}
.size select {
  padding: 0 2px 0 28px;
}
.format {
  width: 139px;
  margin: 0 1px;
}
.format select {
  padding: 0 4px;
}
.letter {
  direction: ltr;
}
.letter svg {
  align-self: flex-start;
  margin-top: 3px;
}
.color {
  width: 16px;
  height: 19px;
  margin: 0 4px;
  border-bottom: 4px solid #f00;
  font-weight: bold;
}
.pct {
  font-size: 15px;
}
.dec {
  flex-direction: column;
  direction: ltr;
  font-size: 9px;
  line-height: 9px;
}
.dec em {
  color: #1e5aa0;
  font-style: normal;
}
.list {
  display: flex;
  flex-direction: column;
}
.list button {
  justify-content: flex-start;
  gap: 4px;
  height: 24px;
  font-size: 13px;
}
.list .gap {
  margin-right: 16px;
}
.clip .big {
  width: 54px;
}
.editing .list {
  width: 120px;
  padding-right: 13px;
}
.big {
  flex-direction: column;
  justify-content: flex-start;
  width: 51px;
  padding-top: 2px;
  line-height: 14px;
}
.big > svg:first-child {
  margin-bottom: 3px;
}
.big > svg:last-child {
  margin-top: 3px;
}
.cells .big {
  width: 42px;
}
.addins .big, .gpt .big {
  width: 100%;
}
.acrobat .big {
  width: 94px;
}
.launcher {
  position: absolute;
  bottom: 0;
  left: 2px;
}
.collapse {
  margin: auto auto 0 6px;
}

/* Formula bar */
.formula {
  display: flex;
  align-items: center;
  height: 45px;
  padding: 1px 5px 0;
}
.formula input {
  width: 100%;
  height: 26px;
  border: 1px solid #444;
  background: #b1b1b1;
  font: inherit;
  color: #444;
}
.namebox input {
  padding: 0 5px;
}
.entry, .namebox {
  position: relative;
}
.entry svg, .namebox svg {
  position: absolute;
  top: 8px;
  right: 4px;
}
.entry {
  flex: 1;
}
.namebox {
  width: 104px;
}
.fx {
  display: flex;
  justify-content: space-around;
  width: 110px;
  height: 26px;
  margin-right: 3px;
  border: 1px solid #444;
  background: #b1b1b1;
}
.fx button {
  width: 36px;
}
.fx i {
  direction: ltr;
  font: italic bold 17px "Liberation Serif", serif;
}
.fx small {
  font-size: 12px;
}
.dots {
  width: 2px;
  height: 10px;
  margin: 0 14px;
  background: repeating-linear-gradient(#fff 0 2px, transparent 2px 4px);
}

/* Sheet */
.sheet {
  flex: 1;
  display: flex;
  min-height: 0;
  border-bottom: 1px solid #999;
}
.grid {
  flex: 1;
  overflow: hidden;
  margin-left: 3px;
}
.grid table {
  width: calc(100% + 28px);
  border-collapse: separate;
  border-spacing: 0;
  table-layout: fixed;
  background: #fff;
  color: #000;
  font-family: "Liberation Sans", "DejaVu Sans Condensed", "DejaVu Sans", sans-serif;
  font-size: 16px;
}
.hd { width: 34px; }
.b { width: 22px; }
.cc { width: 124px; }
.d { width: 139px; }
.e { width: 299px; }
.f { width: 56px; }
.g { width: 74px; }
.h { width: 162px; }
.i { width: 97px; }
.j { width: 112px; }
.k { width: 4px; }
.l { width: 396px; }
.m { width: 199px; }
.grid tr {
  height: 22px;
}
.grid th {
  padding: 0;
  border-bottom: 1px solid #bbb;
  background: #666;
  color: #fff;
  font-weight: normal;
  line-height: 21px;
}
.grid thead th {
  border-bottom: 1px solid #999;
  border-left: 1px solid #bbb;
}
.grid tbody th {
  border-left: 1px solid #999;
}
.grid thead th.cur {
  border-bottom: 2px solid #217346;
  background: #262427;
  line-height: 20px;
}
.grid tbody th.cur {
  border-left: 2px solid #217346;
  background: #262427;
}
.grid thead th.corner {
  background: linear-gradient(to top right, #eee 50%, transparent 50%) 4px 5px / 15px 15px no-repeat #666;
}
.grid td {
  position: relative;
  height: 22px;
  padding: 0 3px;
  line-height: 20px;
  white-space: nowrap;
}
.grid .banner {
  background: #f2f2f2;
  font-size: 13px;
  font-weight: bold;
  text-align: center;
}
.fields td {
  background: #9bc2e6;
  font-size: 15px;
}
.grid .none {
  background: #fff;
  border: 0;
}
.fields .mid {
  text-align: center;
}
.fields .red {
  background: #f00;
}
.fields button {
  position: absolute;
  left: 0;
  bottom: 1px;
  width: 17px;
  height: 17px;
  border: 1px solid #aaa;
  background: #f5f5f5;
  color: #555;
}
.data td {
  border-bottom: 1px solid #9bc2e6;
  background: #ddebf7;
  font-size: 15px;
}
.data td:nth-child(3), .data td:nth-child(4), .data .mail {
  font-size: 16px;
}
.data .mail {
  overflow: hidden;
}
.mail a {
  color: #0563c1;
  text-decoration: underline;
}
.selected::before {
  content: "";
  position: absolute;
  inset: -2px;
  border: 2px solid #217346;
}
.selected::after {
  content: "";
  position: absolute;
  left: -4px;
  bottom: -4px;
  width: 6px;
  height: 6px;
  border: 1px solid #fff;
  background: #217346;
}
.vscroll {
  display: flex;
  flex-direction: column;
  width: 15px;
  margin: 2px 0 0 3px;
  background: #444;
}
.vscroll button, .hscroll button {
  flex: none;
  width: 15px;
  height: 15px;
  border: 1px solid #828282;
  background: #d2d2d2;
}
.thumb {
  border: 1px solid #828282;
  background: #d2d2d2;
}
.vscroll .thumb {
  flex: 1;
  margin: 1px 0 23px;
}

/* Sheet tabs and horizontal scroll */
.sheetbar {
  display: flex;
  align-items: center;
  height: 29px;
  padding: 0 16px 0 21px;
  border-bottom: 1px solid #444;
}
.step {
  width: 28px;
}
.sheettab {
  align-self: flex-start;
  width: 149px;
  height: 25px;
  margin-right: 29px;
  padding: 3px;
  border-bottom: 2px solid #217346;
  background: #fff;
  color: #217346;
  font-family: "DejaVu Sans Condensed", "DejaVu Sans", sans-serif;
  font-size: 11px;
  font-weight: bold;
  text-align: center;
  white-space: nowrap;
}
.sheettab span {
  display: block;
  background: linear-gradient(#fff, #dd7c80);
  line-height: 18px;
}
.plus {
  margin: 0 35px 0 auto;
}
.sheetbar .dots {
  margin: 0 15px;
}
.hscroll {
  display: flex;
  width: 730px;
  background: #444;
}
.hscroll .thumb {
  flex: 1;
  margin: 0 50px 0 100px;
}

/* Status bar */
.status {
  display: flex;
  align-items: center;
  height: 22px;
  padding: 0 11px 0 10px;
  color: #fff;
  font-size: 11px;
}
.access {
  gap: 4px;
  margin-right: 18px;
}
.views {
  display: flex;
  margin: 0 auto 0 2px;
}
.views button {
  width: 40px;
  height: 22px;
}
.views .on {
  background: #444;
}
.zoom {
  width: 18px;
  font-size: 16px;
}
.status input {
  width: 100px;
  height: 12px;
  margin: 0;
  appearance: none;
  background: linear-gradient(#fff, #fff) center / 100% 1px no-repeat;
}
.status input::-webkit-slider-thumb {
  appearance: none;
  width: 6px;
  height: 11px;
  background: #fff;
}
.percent {
  margin-right: 6px;
}

/* Windows taskbar */
.taskbar {
  position: relative;
  display: grid;
  grid-template-columns: 1fr auto 1fr;
  align-items: center;
  height: 48px;
  border-top: 1px solid #b8b8b8;
  background: #dadada;
  color: #111;
}
.tray {
  display: flex;
  align-items: center;
  gap: 8px;
  padding-left: 18px;
}
.tray time {
  display: flex;
  flex-direction: column;
  align-items: center;
  margin-right: 8px;
  font-size: 11px;
  line-height: 15px;
}
.tray svg:nth-of-type(1) {
  margin-left: 5px;
}
.lang {
  margin: 0 9px 0 10px;
}
.tray svg:last-child {
  margin-left: 8px;
}
.apps {
  display: flex;
}
.app {
  position: relative;
  width: 44px;
  height: 46px;
}
.app.current::before {
  content: "";
  position: absolute;
  inset: 4px 3px 4px 5px;
  border-radius: 4px;
  background: #f0f0f0;
  z-index: 0;
}
.app svg {
  position: relative;
}
.app.run::after, .app.current::after {
  content: "";
  position: absolute;
  bottom: 4px;
  left: 19px;
  width: 6px;
  height: 3px;
  border-radius: 2px;
  background: #777;
}
.app.current::after {
  left: 14px;
  width: 16px;
  background: #1a78d4;
}
.badge {
  position: absolute;
  top: 5px;
  left: 4px;
  width: 16px;
  height: 16px;
  border-radius: 50%;
  background: #bc1533;
  color: #fff;
  font-size: 10px;
  font-style: normal;
  line-height: 16px;
}
.s2, .m2, .p2 {
  top: 10px;
  left: 22px;
  width: 12px;
  height: 12px;
  font-size: 8px;
  line-height: 12px;
}
.m, .m2 {
  background: #208b67;
}
.p, .p2 {
  background: #7b8ba0;
}
.watermark {
  position: absolute;
  left: 50%;
  bottom: 12px;
  width: 230px;
  margin-left: -115px;
  color: #aaa;
  font-family: "DejaVu Sans", sans-serif;
  font-size: 64px;
  font-weight: bold;
  line-height: 64px;
  text-align: center;
  opacity: .4;
  pointer-events: none;
}
```
